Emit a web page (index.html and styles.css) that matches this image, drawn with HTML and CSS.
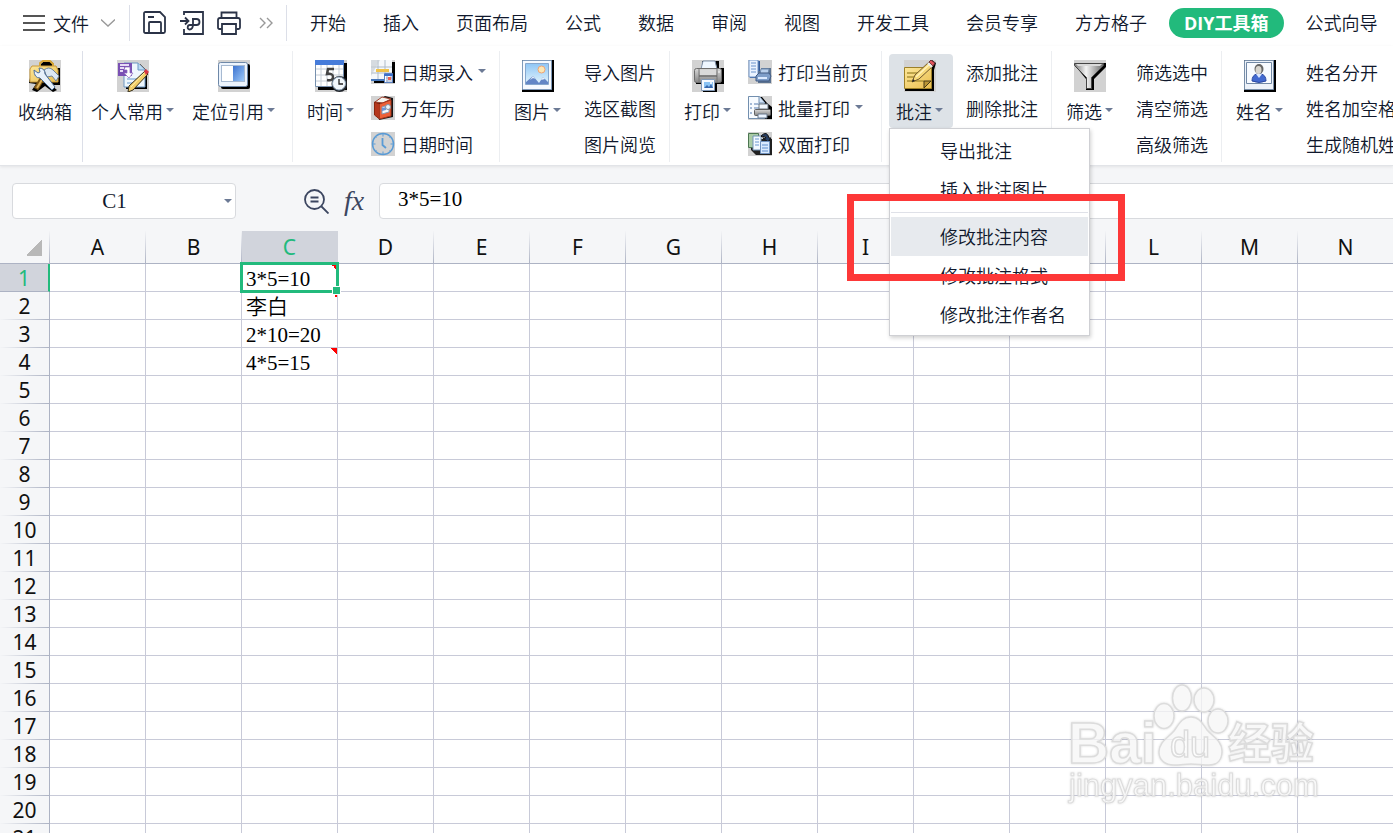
FILE: index.html
```html
<!DOCTYPE html>
<html lang="zh-CN">
<head>
    <meta charset="UTF-8">
    <meta name="viewport" content="width=device-width, initial-scale=1.0">
    <title>DIY工具箱</title>
    <link rel="stylesheet" href="styles.css">
</head>
<body>

    <svg width="0" height="0" class="defs" aria-hidden="true">
        <defs>
            <linearGradient id="sky" x1="0" y1="0" x2="0" y2="1"><stop offset="0" stop-color="#8fc6f5"/><stop offset="1" stop-color="#e4f5fd"/></linearGradient>
            <linearGradient id="blue" x1="0" y1="0" x2="1" y2="1"><stop offset="0" stop-color="#3c72cf"/><stop offset="1" stop-color="#9cc8f8"/></linearGradient>
            <linearGradient id="steel" x1="0" y1="0" x2="1" y2="0"><stop offset="0" stop-color="#777"/><stop offset=".4" stop-color="#f4f4f4"/><stop offset="1" stop-color="#666"/></linearGradient>
            <linearGradient id="gray" x1="0" y1="0" x2="0" y2="1"><stop offset="0" stop-color="#d8d8d8"/><stop offset="1" stop-color="#858585"/></linearGradient>
            <linearGradient id="yellow" x1="0" y1="0" x2="1" y2="1"><stop offset="0" stop-color="#fde79a"/><stop offset="1" stop-color="#e9bd4d"/></linearGradient>
        </defs>
    </svg>

    <header class="topbar">
        <button class="file-button">
            <svg width="22" height="16" viewBox="0 0 22 16" fill="none" stroke="#555" stroke-width="2"><path d="M0 1h22M0 8h22M0 15h22"/></svg>
            <span>文件</span>
            <svg width="14" height="8" viewBox="0 0 14 8" fill="none" stroke="#999" stroke-width="1.3"><path d="M0 .5l7 6.5 7-6.5"/></svg>
        </button>
        <div class="quick">
            <button aria-label="保存"><svg width="24" height="24" viewBox="0 0 24 24" fill="none" stroke="#2b3347" stroke-width="1.8"><path d="M2.500 1h14.500l5 5v14.500q0 1.500-1.500 1.500h-18q-1.500 0-1.500-1.500v-18Q1 1 2.500 1z"/><path d="M6 22v-10q0-1 1-1h10q1 0 1 1v10M5 6h6"/></svg></button>
            <button aria-label="输出为PDF"><svg width="24" height="24" viewBox="0 0 24 24" fill="none" stroke="#2b3347" stroke-width="1.800"><path d="M4 4V1h19v22H4v-5M0 10h8M5 6.500l3.500 3.500L5 13.500"/><path d="M12 8h4.500c4 0 4 6 0 6H10c-3 0-3 4.500-.5 4.500S13 16 13 13V7.500"/></svg></button>
            <button aria-label="打印"><svg width="24" height="24" viewBox="0 0 24 24" fill="none" stroke="#2b3347" stroke-width="1.800"><path d="M4.500 7V1.500h15V7M4.500 18H2.500Q1 18 1 16.500V9q0-2 2-2h18q2 0 2 2v7.500q0 1.500-1.500 1.500h-2"/><path d="M5 13h14v10H5z"/></svg></button>
            <button aria-label="更多"><svg width="14" height="12" viewBox="0 0 14 12" fill="none" stroke="#999" stroke-width="1.400"><path d="M1 1l5 5-5 5M8 1l5 5-5 5"/></svg></button>
        </div>
        <nav class="tabs">
            <a href="#">开始</a>
            <a href="#">插入</a>
            <a href="#">页面布局</a>
            <a href="#">公式</a>
            <a href="#">数据</a>
            <a href="#">审阅</a>
            <a href="#">视图</a>
            <a href="#">开发工具</a>
            <a href="#">会员专享</a>
            <a href="#">方方格子</a>
            <a href="#" class="tab-current">DIY工具箱</a>
            <a href="#">公式向导</a>
        </nav>
    </header>

    <section class="ribbon">
        <div class="group group-box">
            <button class="big">
                <svg class="pic" viewBox="0 0 32 32">
                    <path d="M3 8h9V4l3-3h7l3 3v4h6v17h-9l6 5-4 2-8-6-8 6-5-2 4-6-7-1z" fill="#000"/>
                    <path d="M11 6V3l3-2h7l3 3v3" fill="none" stroke="#d9a83a" stroke-width="2"/>
                    <path d="M3 6h24l2 4v12H1V9z" fill="url(#yellow)" stroke="#c99a3d"/>
                    <path d="M17 12L7 29" stroke="#7b5514" stroke-width="5"/>
                    <path d="M17 13L8 28" stroke="#e0b45a" stroke-width="2"/>
                    <path d="M15 10q5-4 9 0l6 6-3 5-4-5-5 1z" fill="#dce8f3" stroke="#718499"/>
                    <path d="M5 10l4 3 2-1-1-4q6 0 6 6l10 13-3 3-12-12q-6 0-6-8z" fill="#e7f1fb" stroke="#4d6e97"/>
                </svg>
                <span class="label">收纳箱</span>
            </button>
        </div>

        <div class="group group-common">
            <button class="big">
                <svg class="pic" viewBox="0 0 32 32">
                    <path d="M9 4h14l7 7v18H9z" fill="#000"/>
                    <path d="M7 3h14l7 7v17H7z" fill="#eef7fd" stroke="#6d97c4"/>
                    <path d="M21 3v7h7" fill="#bddbf3" stroke="#6d97c4"/>
                    <path d="M10 19h14M10 23h12" stroke="#a9c7e4" stroke-width="2"/>
                    <path d="M1 3h14v13H1z" fill="#7a50b4"/>
                    <path d="M3 5h9M3 8h4M3 11h3" stroke="#e6dbf5" stroke-width="2"/>
                    <path d="M8 7h5v6h3l-4 5-5-5h3v-3H7z" fill="#fff" stroke="#8b66bd" stroke-width=".7"/>
                    <path d="M28 11l3 3-15 16-5 2 1-6z" fill="#f3cf68" stroke="#39301d"/>
                    <path d="M27 11l2-2 3 3-3 3z" fill="#d93545"/>
                    <path d="M14 27L27 13" stroke="#fff0ad"/>
                </svg>
                <span class="label">个人常用<i class="arrow"></i></span>
            </button>
            <button class="big">
                <svg class="pic" viewBox="0 0 32 32">
                    <rect x="3" y="4" width="29" height="25" rx="2" fill="#000"/>
                    <rect x=".5" y="2.500" width="29" height="24" rx="2" fill="#edf4fd" stroke="#6e88a8"/>
                    <rect x="3.500" y="5.500" width="23" height="16" fill="#fff" stroke="#a6b9d1"/>
                    <rect x="15" y="6" width="11" height="15" fill="url(#blue)"/>
                </svg>
                <span class="label">定位引用<i class="arrow"></i></span>
            </button>
        </div>

        <div class="group">
            <button class="big">
                <svg class="pic" viewBox="0 0 32 32">
                    <path d="M3 3h29v27H3z" fill="#000"/>
                    <path d="M.5.500h28v26H.500z" fill="#fff" stroke="#7790ae"/>
                    <path d="M0 0h29v5H0z" fill="#467cda"/>
                    <path d="M1 9h27M1 15h27M1 21h27M6 5v21M12 5v21M18 5v21M24 5v21" stroke="#c4ccd5"/>
                    <path d="M19 9h-6l-1 5q6-1 6 3t-6 3" fill="none" stroke="#444" stroke-width="2.500"/>
                    <circle cx="24.500" cy="24" r="8" fill="#20242a"/>
                    <circle cx="24" cy="23.500" r="6.500" fill="#f1f7fc" stroke="#91a6bb"/>
                    <path d="M24 19v5h4" fill="none" stroke="#222" stroke-width="1.300"/>
                </svg>
                <span class="label">时间<i class="arrow"></i></span>
            </button>
            <div class="column">
                <button class="small">
                    <svg class="icon" viewBox="0 0 24 24">
                        <path d="M3 2h21v21H3z" fill="#000"/>
                        <path d="M0 0h21v20H0z" fill="#f5f8fb"/>
                        <path d="M0 7h21M0 13h21M7 0v20M14 0v20" stroke="#aebbc9"/>
                        <path d="M0 0h9L0 16z" fill="#c9ced4" opacity=".7"/>
                        <path d="M5 9h13v3H5z" fill="#f0c249"/>
                        <path d="M0 20h15" stroke="#4778bd" stroke-width="2"/>
                        <path d="M13.500 13.500h8v9h-8z" fill="#fff" stroke="#5d83c3"/>
                        <path d="M13 15h9" stroke="#3d70cb" stroke-width="2"/>
                        <path d="M15 18h6M15 21h4M16 16v6M20 16v6" stroke="#98a9c8"/>
                        <path d="M17 17h3v3h-3z" fill="#ee6252"/>
                    </svg>
                    日期录入<i class="arrow"></i>
                </button>
                <button class="small">
                    <svg class="icon" viewBox="0 0 24 24">
                        <path d="M6 5l8-5 8 2v19l-14 3z" fill="#151515"/>
                        <path d="M4 6l7-5 9 2-8 4z" fill="#f5f3ed" stroke="#9f4330"/>
                        <path d="M3.500 6l5 2v15l-5-4z" fill="#b5371d" stroke="#89260f"/>
                        <path d="M8.500 8L20 4v16L8.500 23z" fill="#ed6037" stroke="#a8371d"/>
                        <path d="M11 11l7-2v7l-7 2z" fill="#f7fbff" stroke="#8a98b0"/>
                        <path d="M11 12l4-1v3l-4 1z" fill="#6a94d8"/>
                        <circle cx="17" cy="11" r="2.500" fill="#edf3f8" stroke="#8291a2"/>
                    </svg>
                    万年历
                </button>
                <button class="small">
                    <svg class="icon" viewBox="0 0 24 24" fill="none" stroke="#5a9bd5">
                        <circle cx="12" cy="12" r="10.500" stroke-width="1.500"/>
                        <path d="M12 1.500v3M12 19.500v3M1.500 12h3M19.500 12h3M4.500 4.500l1 1M18.500 18.500l1 1M4.500 19.500l1-1M18.500 5.500l1-1"/>
                        <path d="M11.500 6v7l3.500 3" stroke-width="1.800"/>
                    </svg>
                    日期时间
                </button>
            </div>
        </div>

        <div class="group">
            <button class="big">
                <svg class="pic" viewBox="0 0 32 32">
                    <path d="M0 0h32v32H0z" fill="#000"/>
                    <path d="M.500.500h29v29H.500z" fill="#f6faff" stroke="#7f9aba"/>
                    <path d="M3.500 3.500h23v21h-23z" fill="url(#sky)" stroke="#86a7cd"/>
                    <circle cx="19.500" cy="9.500" r="3.500" fill="#fbe7b5" stroke="#f0a474"/>
                    <path d="M4 22l7-6 6 7 4-6 5 5v2H4z" fill="#6386c6"/>
                    <path d="M8 20l3-4 2 3-2-1zM19 20l2-3 2 2z" fill="#e7f1fd"/>
                </svg>
                <span class="label">图片<i class="arrow"></i></span>
            </button>
            <div class="column">
                <button class="small plain">导入图片</button>
                <button class="small plain">选区截图</button>
                <button class="small plain">图片阅览</button>
            </div>
        </div>

        <div class="group">
            <button class="big">
                <svg class="pic" viewBox="0 0 32 32">
                    <path d="M10 1h17v7h5v16h-7v8H11v-8H4V9h6z" fill="#000"/>
                    <path d="M9 9l2-8h12l2 8z" fill="#eef6ff" stroke="#8193ab"/>
                    <rect x="2.500" y="8.500" width="27" height="14" rx="2" fill="url(#gray)" stroke="#6d6d6d"/>
                    <path d="M7 9v13M25 9v13" stroke="#777"/>
                    <path d="M7 16h18" stroke="#555"/>
                    <path d="M8 10h16v5H8z" fill="#dadada"/>
                    <path d="M9.500 19.500h13v11h-13z" fill="#f6faff" stroke="#8299b7"/>
                    <path d="M12 22h9v6h-9z" fill="#8ac3f4"/>
                    <path d="M12 28l3-3 2 2 2-3 2 4z" fill="#3768ae"/>
                    <circle cx="19" cy="23" r="1" fill="#fff"/>
                    <circle cx="27" cy="12" r=".8" fill="#fff"/>
                </svg>
                <span class="label">打印<i class="arrow"></i></span>
            </button>
            <div class="column">
                <button class="small">
                    <svg class="icon" viewBox="0 0 24 24">
                        <path d="M2 1h10v17H2z" fill="#345b98"/>
                        <path d="M1 0h9v17H1z" fill="#eaf3ff" stroke="#7195c8"/>
                        <path d="M3 3h5M3 6h5M3 9h5M3 12h5" stroke="#6a93cb"/>
                        <path d="M10 21V11h3V8h10v15H10z" fill="#5c7391"/>
                        <path d="M13 9h8l-1 5h-8z" fill="#b9d0ec" stroke="#718caf"/>
                        <path d="M8 16l3-3h10l2 3-2 5H8z" fill="#7e9ec9" stroke="#405b83"/>
                        <path d="M10 18h9" stroke="#dbeaff" stroke-width="2"/>
                    </svg>
                    打印当前页
                </button>
                <button class="small">
                    <svg class="icon" viewBox="0 0 24 24">
                        <path d="M2 1h12l5 6 5 4v12H2z" fill="#000"/>
                        <path d="M.500.500h11l5 6v16H.500z" fill="#f7fbff" stroke="#728faf"/>
                        <path d="M11 1v6h6" fill="#d2e4f8" stroke="#728faf"/>
                        <path d="M2 8h2M6 8h6M2 12h2M6 12h5M2 17h2" stroke="#8aa5c9" stroke-width="1.500"/>
                        <path d="M11 8h9v5h-9z" fill="#f0f6fc" stroke="#697580"/>
                        <rect x="6.500" y="13.500" width="16" height="6" rx="1" fill="url(#gray)" stroke="#606060"/>
                        <path d="M10 18h9v4h-9z" fill="#eaf3ff" stroke="#68788b"/>
                    </svg>
                    批量打印<i class="arrow"></i>
                </button>
                <button class="small">
                    <svg class="icon" viewBox="0 0 24 24">
                        <path d="M2 1h8v6h14v16H8l-5-5z" fill="#202020"/>
                        <path d="M.500 1.500h10v14h-10z" fill="#a9cba5" stroke="#4c7551"/>
                        <path d="M5 4h8v14H5z" fill="#f2f9ff" stroke="#7393b7"/>
                        <path d="M7 7h4M7 10h4M7 13h4" stroke="#6b96cf"/>
                        <path d="M13 4q6-6 8 2h2l-3 4-5-4h3q-1-3-4-1z" fill="#263e63" stroke="#111"/>
                        <path d="M12.500 9.500h9v12h-9z" fill="#d9eaff" stroke="#6e91be"/>
                        <path d="M14 13h6M14 16h6M14 19h6" stroke="#5c8dcd"/>
                    </svg>
                    双面打印
                </button>
            </div>
        </div>

        <div class="group">
            <div class="dropdown">
                <button class="big open" aria-expanded="true">
                    <svg class="pic" viewBox="0 0 32 32">
                        <path d="M2 7h21l5-7 4 3-2 7v21H1z" fill="#000"/>
                        <path d="M.500 7.500h27v21H.500z" fill="url(#yellow)" stroke="#9d8027"/>
                        <path d="M3 13h17M3 17h14M3 21h17" stroke="#ac9339" stroke-width="1.500"/>
                        <path d="M20 28v-7h7z" fill="#ba9535" stroke="#463a16"/>
                        <path d="M8 22l3-7L25 2l4 4-14 13z" fill="#f7d979" stroke="#72592d"/>
                        <path d="M12 17L26 4" stroke="#fff2ba" stroke-width="1.500"/>
                        <path d="M25 2l2-2 4 3-2 3z" fill="#e3545c" stroke="#6d3137"/>
                        <path d="M24 3l4 4" stroke="#e8edf0" stroke-width="2"/>
                        <path d="M8 22l1-3 2 2z" fill="#222"/>
                    </svg>
                    <span class="label">批注<i class="arrow"></i></span>
                </button>
                <div class="menu">
                    <button>导出批注</button>
                    <button>插入批注图片</button>
                    <hr>
                    <div class="selected">
                        <button>修改批注内容</button>
                        <div class="mark"></div>
                    </div>
                    <button>修改批注格式</button>
                    <button>修改批注作者名</button>
                </div>
            </div>
            <div class="column">
                <button class="small plain">添加批注</button>
                <button class="small plain">删除批注</button>
            </div>
        </div>

        <div class="group">
            <button class="big">
                <svg class="pic" viewBox="0 0 32 32">
                    <path d="M3 3h29v4L20 19v11h-8V19L3 8z" fill="#000"/>
                    <path d="M.500 3.500h29v2l-12 12v11h-5v-11L.500 5.500z" fill="url(#steel)" stroke="#444"/>
                    <path d="M2 4h26l-2 2H4z" fill="#d9d9d9"/>
                </svg>
                <span class="label">筛选<i class="arrow"></i></span>
            </button>
            <div class="column">
                <button class="small plain">筛选选中</button>
                <button class="small plain">清空筛选</button>
                <button class="small plain">高级筛选</button>
            </div>
        </div>

        <div class="group">
            <button class="big">
                <svg class="pic" viewBox="0 0 32 32">
                    <path d="M0 0h32v32H0z" fill="#000"/>
                    <path d="M.500.500h29v29H.500z" fill="#edf2f9" stroke="#788ea8"/>
                    <path d="M2.500 2.500h25v21h-25z" fill="#f8fbff" stroke="#7188a5"/>
                    <path d="M8 21q0-6 5-7h4q5 1 5 7-7 3-14 0z" fill="#4269cf" stroke="#2a48a0"/>
                    <path d="M12 14l3 4 3-4z" fill="#dbe8ff"/>
                    <ellipse cx="15" cy="9" rx="4.500" ry="5" fill="#666"/>
                    <ellipse cx="14.500" cy="10" rx="3" ry="4" fill="#d8d5ce"/>
                </svg>
                <span class="label">姓名<i class="arrow"></i></span>
            </button>
            <div class="column">
                <button class="small plain">姓名分开</button>
                <button class="small plain">姓名加空格</button>
                <button class="small plain">生成随机姓名</button>
            </div>
        </div>
    </section>

    <div class="formula-bar">
        <div class="name-box">
            <input type="text" value="C1" aria-label="名称框">
            <button aria-label="选择名称"><i class="arrow"></i></button>
        </div>
        <button class="find" aria-label="查找"><svg width="25" height="25" viewBox="0 0 25 25" fill="none" stroke="#3c4660" stroke-width="1.800"><circle cx="10.500" cy="10.500" r="9.500"/><path d="M17.500 17.500l7 7M6.500 8.500h8M6.500 12.500h8"/></svg></button>
        <button class="fx" aria-label="插入函数">fx</button>
        <input type="text" class="formula" value="3*5=10" aria-label="编辑栏">
    </div>

    <main class="sheet">
        <table>
            <thead><tr id="columns"><th class="corner"></th></tr></thead>
            <tbody id="rows"></tbody>
        </table>

        <svg class="watermark" width="260" height="130" viewBox="0 0 260 130">
            <g class="outline">
                <text x="3" y="82" class="brand">Bai</text>
                <ellipse cx="99" cy="35" rx="10" ry="12.500"/>
                <ellipse cx="117" cy="17" rx="9.500" ry="13"/>
                <ellipse cx="139" cy="19" rx="10" ry="12"/>
                <ellipse cx="153" cy="40" rx="10" ry="12"/>
                <path d="M126 36c-9 0-12 7-17 14-6 7-15 11-15 21 0 9 7 13 15 13 7 0 11-1 17-1s12 1 18 1c9 0 13-6 13-14 0-10-9-14-15-21-5-7-8-13-16-13z"/>
                <text x="105" y="76" class="brand-small">du</text>
                <text x="163" y="78" class="brand-cjk">经验</text>
                <text x="4" y="115" class="address">jingyan.baidu.com</text>
            </g>
        </svg>
    </main>

    <script>
        const letters = "ABCDEFGHIJKLMN".split("");
        const values = { C1: "3*5=10", C2: "李白", C3: "2*10=20", C4: "4*5=15" };
        const comments = ["C1", "C2", "C4"];
        const active = "C1";
        const columns = document.getElementById("columns");
        const rows = document.getElementById("rows");

        letters.forEach(letter => {
            const th = document.createElement("th");
            th.textContent = letter;
            if (letter === active[0]) th.className = "current";
            columns.appendChild(th);
        });

        for (let i = 1; i <= 21; i++) {
            const tr = document.createElement("tr");
            const th = document.createElement("th");
            th.textContent = i;
            if (i === 1) th.className = "current";
            tr.appendChild(th);
            letters.forEach(letter => {
                const name = letter + i;
                const td = document.createElement("td");
                td.textContent = values[name] || "";
                if (comments.includes(name)) td.classList.add("comment");
                if (name === active) td.classList.add("active");
                tr.appendChild(td);
            });
            rows.appendChild(tr);
        }
    </script>
</body>
</html>
```
FILE: styles.css
```css
* {
    box-sizing: border-box;
}
body {
    margin: 0;
    height: 100vh;
    overflow: hidden;
    display: flex;
    flex-direction: column;
    background-color: #fff;
    color: #10182c;
    font-family: "Noto Sans CJK SC", sans-serif;
    font-size: 18px;
    font-weight: 350;
    line-height: 26px;
    white-space: nowrap;
}
button, input {
    font: inherit;
    color: inherit;
    border: none;
    background: none;
    padding: 0;
    margin: 0;
}
button {
    display: flex;
    align-items: center;
}
svg {
    flex-shrink: 0;
}
.defs {
    position: absolute;
}
.arrow {
    flex-shrink: 0;
    width: 8px;
    height: 4px;
    margin: 0 0 2px 3px;
    background-color: #6c7a95;
    clip-path: polygon(0 0, 100% 0, 50% 100%);
}

/* menu tabs */
.topbar {
    flex-shrink: 0;
    display: flex;
    align-items: center;
    height: 46px;
}
.file-button {
    gap: 8px;
    padding-left: 23px;
}
.file-button svg:last-child {
    margin-left: 4px;
}
.quick {
    display: flex;
    align-items: center;
    gap: 13px;
    height: 36px;
    margin-left: 14px;
    padding: 0 13px;
    border-left: 1px solid #dcdfe8;
    border-right: 1px solid #dcdfe8;
}
.quick button:last-child {
    margin-left: 5px;
}
.tabs {
    display: flex;
    align-items: center;
    gap: 37px;
    padding-left: 23px;
}
.tabs a {
    padding-bottom: 2px;
    color: inherit;
    text-decoration: none;
}
.tabs .tab-current {
    margin: 0 -15px;
    padding: 2px 15px;
    border-radius: 15px;
    background-color: #22ba7c;
    color: #fff;
    font-family: "Open Sans", "Noto Sans CJK SC", sans-serif;
    font-weight: bold;
}

/* ribbon */
.ribbon {
    position: relative;
    z-index: 2;
    flex-shrink: 0;
    display: flex;
    height: 120px;
    padding: 5px 0 3px;
    border-bottom: 1px solid #e2e4e8;
    background-color: #fff;
    box-shadow: 0 1px 3px rgba(0, 0, 0, 0.08);
}
.group {
    flex-shrink: 0;
    display: flex;
    align-items: flex-start;
    gap: 7px;
    padding: 3px 13px 0 7px;
    border-right: 1px solid #eceef1;
}
.group:last-child {
    border-right: none;
}
.group-box {
    padding: 3px 0 0 11px;
    border-right-color: #dcdfe8;
}
.group-common {
    padding: 3px 7px 0 1px;
    gap: 1px;
}
.big {
    flex-direction: column;
    height: 74px;
    padding: 6px 10px 0 7px;
    border-radius: 4px;
}
.big.open {
    background-color: #dde2e7;
}
.label {
    display: flex;
    align-items: center;
    margin-top: 6px;
}
.pic {
    width: 32px;
    height: 32px;
    background-color: #d2d2d2;
}
.icon {
    width: 24px;
    height: 24px;
    margin-right: 6px;
    background-color: #d2d2d2;
}
.column {
    display: flex;
    flex-direction: column;
}
.small {
    height: 36px;
}
.small .arrow {
    margin-left: 5px;
}
.plain {
    padding-left: 6px;
}

/* drop-down of the comment button */
.dropdown {
    position: relative;
}
.menu {
    position: absolute;
    top: 100%;
    left: 0;
    width: 201px;
    padding: 2px 1px 1px;
    border: 1px solid #cfd0d4;
    background-color: #fff;
    box-shadow: 1px 2px 4px rgba(0, 0, 0, 0.18);
}
.menu button {
    width: 100%;
    height: 39px;
    padding: 0 0 2px 49px;
}
.menu hr {
    height: 1px;
    margin: 3px 0 4px;
    border: none;
    background-color: #dfe1e8;
}
.selected {
    position: relative;
    background-color: #e7eaee;
}
.mark {
    position: absolute;
    z-index: 1;
    inset: -23px -37px -25px -44px;
    border: 7px solid #fd3838;
    pointer-events: none;
}

/* formula bar */
.formula-bar {
    flex-shrink: 0;
    display: flex;
    align-items: center;
    height: 65px;
    padding: 5px 0 0 12px;
    background-color: #f5f6f8;
}
.name-box, .formula {
    height: 36px;
    border: 1px solid #d8dade;
    border-radius: 4px;
    background-color: #fff;
    font-family: "Liberation Serif", serif;
    font-size: 21px;
    font-weight: 400;
}
.name-box {
    display: flex;
    align-items: center;
    width: 224px;
    padding-right: 3px;
}
.name-box input {
    flex: 1;
    min-width: 0;
    padding-right: 8px;
    text-align: center;
}
.name-box .arrow {
    margin: 0;
}
.find {
    margin-left: 68px;
}
.fx {
    margin-left: 15px;
    width: 22px;
    color: #3c4660;
    font-family: "Liberation Serif", serif;
    font-size: 28px;
    font-style: italic;
    font-weight: 400;
}
.formula {
    flex: 1;
    min-width: 0;
    margin: 0 -4px 0 13px;
    padding: 0 18px 3px;
    color: #000;
}

/* sheet */
.sheet {
    position: relative;
    flex: 1;
    min-height: 0;
    overflow: hidden;
}
table {
    table-layout: fixed;
    width: 0;
    border-spacing: 0;
}
th {
    width: 96px;
    height: 28px;
    padding: 0;
    color: #111;
    background-color: #f5f6f8;
    font-family: "Noto Sans", sans-serif;
    font-size: 21px;
    font-weight: 400;
    line-height: 26px;
}
thead th {
    height: 33px;
    border-bottom: 1px solid #acb2c3;
    border-right: 1px solid;
    border-image: linear-gradient(to bottom, #f5f6f8, #acb2c3) 1;
}
thead .corner {
    width: 50px;
    background: linear-gradient(135deg, transparent 50%, #b8b8b8 50%) no-repeat 26px 9px / 16px 16px #f5f6f8;
}
tbody th {
    border-right: 1px solid #a7aec0;
    border-bottom: 1px solid;
    border-image: linear-gradient(to right, #f5f6f8, #acb2c3) 1;
}
thead .current, tbody .current {
    background-color: #d1d4dc;
    color: #22ba7c;
}
thead .current {
    border-image: none;
    border-right-color: #d1d4dc;
}
tbody .current {
    border-image: none;
    border-right: 2px solid #22ba7c;
    border-bottom-color: #acb2c3;
}
td {
    position: relative;
    height: 28px;
    padding: 3px 0 0 4px;
    border-right: 1px solid #c8cad8;
    border-bottom: 1px solid #c8cad8;
    color: #000;
    font-family: "Liberation Serif", "Noto Sans CJK SC", serif;
    font-size: 21px;
    font-weight: 350;
    line-height: 24px;
}
.comment {
    background: linear-gradient(45deg, transparent 50%, #f00 50%) no-repeat right top / 6px 6px;
}
.active::before {
    content: "";
    position: absolute;
    z-index: 1;
    inset: -2px;
    border: 3px solid #22ba7c;
}
.active::after {
    content: "";
    position: absolute;
    z-index: 1;
    right: -4px;
    bottom: -4px;
    width: 7px;
    height: 7px;
    border: 1px solid #fff;
    background-color: #22ba7c;
}

.watermark {
    position: absolute;
    right: 68px;
    bottom: 22px;
    pointer-events: none;
}
.outline {
    fill: rgba(255, 255, 255, 0.75);
    stroke: #dcdcdc;
    stroke-width: 1.5;
    font-family: "Liberation Sans", sans-serif;
    filter: drop-shadow(0 0 1px rgba(0, 0, 0, 0.15));
}
.brand {
    font-size: 57px;
    font-weight: bold;
}
.brand-small {
    font-size: 36px;
}
.brand-cjk {
    font-family: "Noto Sans CJK SC", sans-serif;
    font-size: 43px;
    font-weight: bold;
}
.address {
    font-size: 31px;
    stroke-width: 1;
}
```
